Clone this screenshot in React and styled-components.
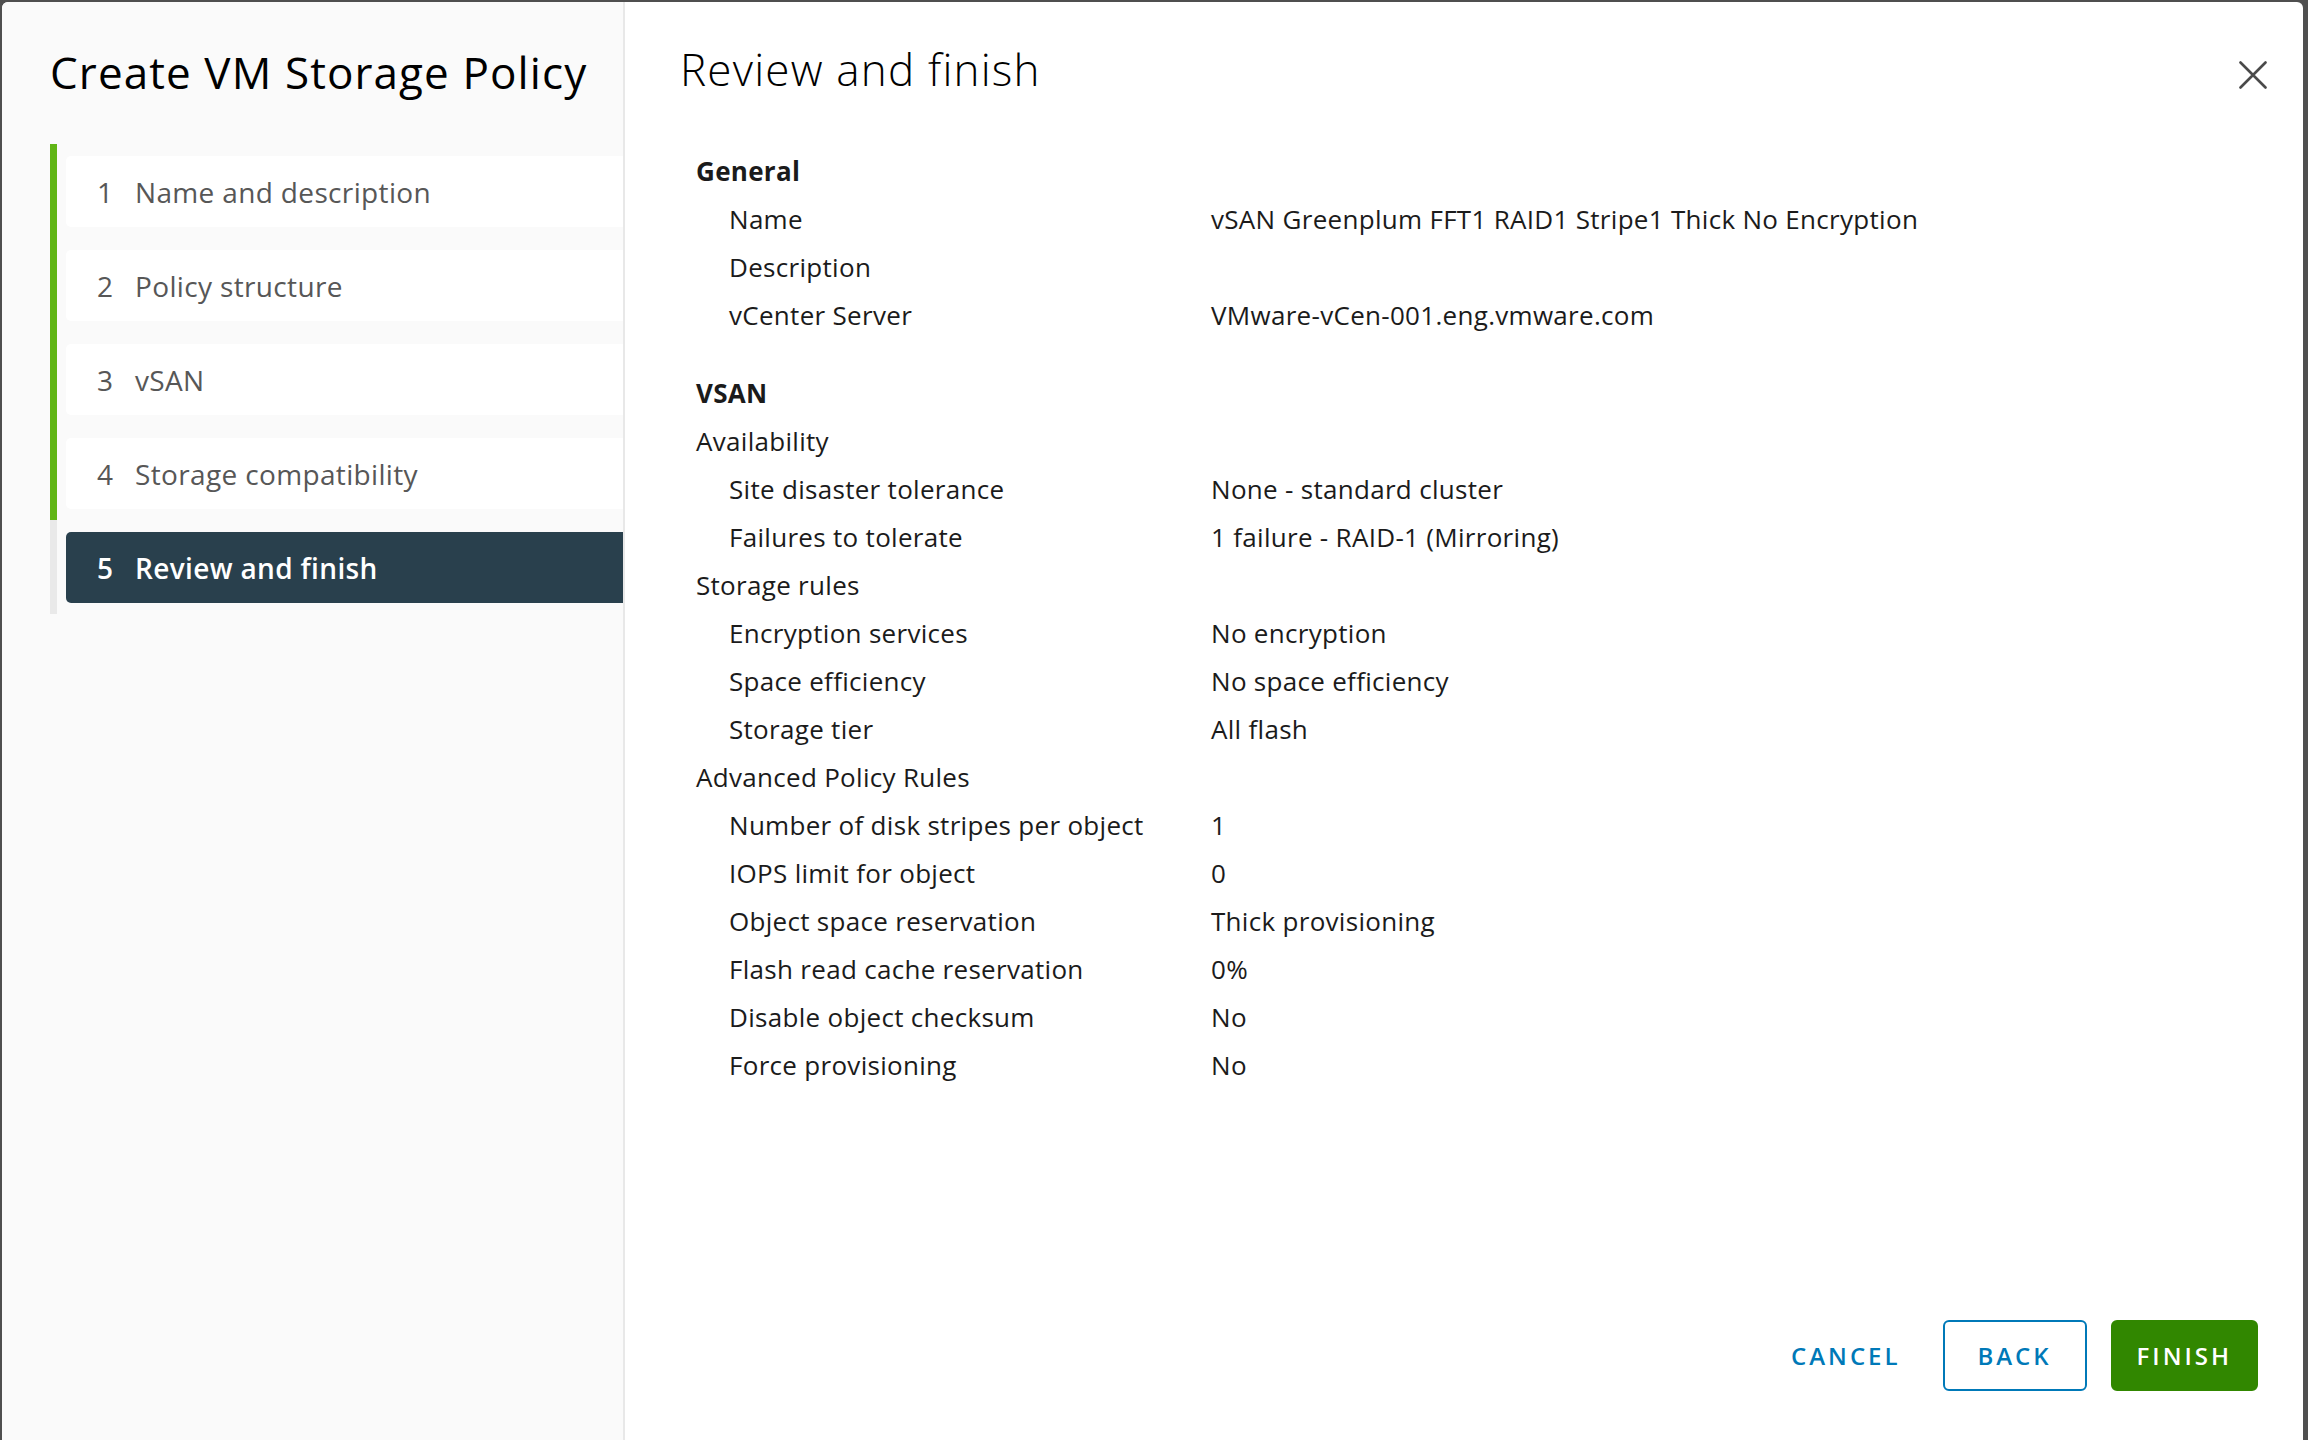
import React from 'react';
import styled, { createGlobalStyle } from 'styled-components';

const GlobalStyle = createGlobalStyle`
  html, body {
    margin: 0;
    padding: 0;
    background: #4f4f4f;
  }
  body {
    font-family: "Open Sans", "Liberation Sans", sans-serif;
  }
  * { box-sizing: border-box; }
`;

const steps = [
  { n: 1, label: 'Name and description', done: true },
  { n: 2, label: 'Policy structure', done: true },
  { n: 3, label: 'vSAN', done: true },
  { n: 4, label: 'Storage compatibility', done: true },
  { n: 5, label: 'Review and finish', active: true },
];

const sections = [
  {
    title: 'General',
    groups: [
      {
        rows: [
          ['Name', 'vSAN Greenplum FFT1 RAID1 Stripe1 Thick No Encryption'],
          ['Description', ''],
          ['vCenter Server', 'VMware-vCen-001.eng.vmware.com'],
        ],
      },
    ],
  },
  {
    title: 'VSAN',
    groups: [
      {
        name: 'Availability',
        rows: [
          ['Site disaster tolerance', 'None - standard cluster'],
          ['Failures to tolerate', '1 failure - RAID-1 (Mirroring)'],
        ],
      },
      {
        name: 'Storage rules',
        rows: [
          ['Encryption services', 'No encryption'],
          ['Space efficiency', 'No space efficiency'],
          ['Storage tier', 'All flash'],
        ],
      },
      {
        name: 'Advanced Policy Rules',
        rows: [
          ['Number of disk stripes per object', '1'],
          ['IOPS limit for object', '0'],
          ['Object space reservation', 'Thick provisioning'],
          ['Flash read cache reservation', '0%'],
          ['Disable object checksum', 'No'],
          ['Force provisioning', 'No'],
        ],
      },
    ],
  },
];

const Modal = styled.div`
  margin: 2px 5px 0 2px;
  height: 1438px;
  display: flex;
  background: #fff;
  border-radius: 6px 6px 0 0;
  overflow: hidden;
`;

const Sidebar = styled.aside`
  width: 623px;
  flex-shrink: 0;
  background: #fafafa;
  border-right: 2px solid #e8e8e8;
  padding-top: 44px;
`;

const WizardTitle = styled.h1`
  margin: 0 0 46px 48px;
  font-size: 44px;
  line-height: 52px;
  font-weight: 400;
  color: #000;
  letter-spacing: 1.1px;
  white-space: nowrap;
`;

const StepList = styled.div`
  margin-left: 48px;
`;

const StepRow = styled.div`
  padding: 12px 0 11px 9px;
  border-left: 7px solid ${(p) => (p.done ? '#60b515' : '#e9e9e9')};
`;

const StepItem = styled.div`
  height: 71px;
  display: flex;
  align-items: center;
  padding-left: 31px;
  border-radius: 5px 0 0 5px;
  background: ${(p) => (p.active ? '#29404d' : '#fff')};
  color: ${(p) => (p.active ? '#fff' : '#575757')};
  font-size: 28px;
  letter-spacing: 0.35px;
  font-weight: ${(p) => (p.active ? 600 : 400)};
`;

const StepNum = styled.span`
  width: 38px;
`;

const Main = styled.section`
  flex: 1;
  display: flex;
  flex-direction: column;
`;

const Header = styled.div`
  display: flex;
  justify-content: space-between;
  align-items: center;
  padding: 37px 36px 0 55px;
`;

const PageTitle = styled.h2`
  margin: 0;
  font-size: 44px;
  line-height: 60px;
  font-weight: 300;
  letter-spacing: 1.2px;
  color: #000;
`;

const CloseButton = styled.button`
  margin-top: 12px;
  width: 28px;
  height: 28px;
  padding: 0;
  border: none;
  background: none;
  cursor: pointer;
  display: flex;
`;

const Content = styled.div`
  flex: 1;
  padding: 48px 0 0 71px;
  color: #1b1b1b;
  font-size: 26px;
  letter-spacing: 0.3px;
  line-height: 48px;
`;

const Section = styled.div`
  & + & {
    margin-top: 30px;
  }
`;

const SectionTitle = styled.div`
  font-weight: 700;
`;

const GroupName = styled.div``;

const Row = styled.div`
  display: grid;
  grid-template-columns: 482px 1fr;
  padding-left: 33px;
  min-height: 48px;
`;

const Footer = styled.div`
  display: flex;
  justify-content: flex-end;
  align-items: center;
  gap: 24px;
  padding: 0 45px 49px 0;
`;

const Button = styled.button`
  height: 71px;
  min-width: 144px;
  padding: 0 ${(p) => (p.flat ? '16px' : '24px')} 0 24px;
  border-radius: 6px;
  font-family: "Open Sans", "Liberation Sans", sans-serif;
  font-size: 24px;
  font-weight: 600;
  letter-spacing: 3px;
  cursor: pointer;
  border: 2px solid
    ${(p) => (p.variant === 'primary' ? '#318700' : p.variant === 'outline' ? '#0079b8' : 'transparent')};
  background: ${(p) => (p.variant === 'primary' ? '#318700' : 'transparent')};
  color: ${(p) => (p.variant === 'primary' ? '#fff' : '#0079b8')};
`;

function CloseIcon() {
  return (
    <svg width="28" height="28" viewBox="0 0 28 28">
      <path d="M1.5 1.5 L26.5 26.5 M26.5 1.5 L1.5 26.5" stroke="#4a4a4a" strokeWidth="2.6" strokeLinecap="round" />
    </svg>
  );
}

export default function App() {
  return (
    <>
      <GlobalStyle />
      <Modal>
        <Sidebar>
          <WizardTitle>Create VM Storage Policy</WizardTitle>
          <StepList>
            {steps.map((s) => (
              <StepRow key={s.n} done={s.done}>
                <StepItem active={s.active}>
                  <StepNum>{s.n}</StepNum>
                  {s.label}
                </StepItem>
              </StepRow>
            ))}
          </StepList>
        </Sidebar>
        <Main>
          <Header>
            <PageTitle>Review and finish</PageTitle>
            <CloseButton aria-label="Close">
              <CloseIcon />
            </CloseButton>
          </Header>
          <Content>
            {sections.map((sec) => (
              <Section key={sec.title}>
                <SectionTitle>{sec.title}</SectionTitle>
                {sec.groups.map((g, i) => (
                  <div key={i}>
                    {g.name && <GroupName>{g.name}</GroupName>}
                    {g.rows.map(([label, value]) => (
                      <Row key={label}>
                        <span>{label}</span>
                        <span>{value}</span>
                      </Row>
                    ))}
                  </div>
                ))}
              </Section>
            ))}
          </Content>
          <Footer>
            <Button flat>CANCEL</Button>
            <Button variant="outline">BACK</Button>
            <Button variant="primary">FINISH</Button>
          </Footer>
        </Main>
      </Modal>
    </>
  );
}
